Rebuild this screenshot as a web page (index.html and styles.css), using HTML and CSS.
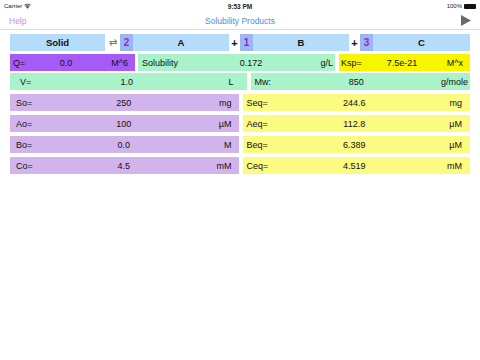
FILE: index.html
```html
<!DOCTYPE html>
<html>
<head>
<meta charset="utf-8">
<link rel="stylesheet" href="styles.css">
</head>
<body>
<div class="status">
  <div class="carrier">Carrier <svg class="wifi" width="7" height="6" viewBox="0 0 14 11"><path d="M7 11 L4.5 8 A3.5 3.5 0 0 1 9.5 8 Z M2.6 6 A6.5 6.5 0 0 1 11.4 6 L10.3 7.2 A5 5 0 0 0 3.7 7.2 Z M0.6 3.7 A9.5 9.5 0 0 1 13.4 3.7 L12.3 4.9 A8 8 0 0 0 1.7 4.9 Z" fill="#333"/></svg></div>
  <div class="time">9:53 PM</div>
  <div class="batt">100% <span class="battery"></span></div>
</div>
<div class="nav">
  <div class="help">Help</div>
  <div class="title">Solubility Products</div>
  <svg class="play" width="10" height="11" viewBox="0 0 10 11"><path d="M0 0 L10 5.5 L0 11 Z" fill="#6b6b6b"/></svg>
</div>
<div class="content">
  <div class="eq">
    <div class="sp solid">Solid</div>
    <div class="op arrows">⇄</div>
    <div class="num">2</div>
    <div class="sp">A</div>
    <div class="op">+</div>
    <div class="num">1</div>
    <div class="sp">B</div>
    <div class="op">+</div>
    <div class="num">3</div>
    <div class="sp">C</div>
  </div>
  <div class="row r2">
    <div class="cell purple qcell"><span>Q=</span><span class="v">0.0</span><span class="u">M^6</span></div>
    <div class="cell green solcell"><span>Solubility</span><span class="v">0.172</span><span class="u">g/L</span></div>
    <div class="cell yellow kcell"><span>Ksp=</span><span class="v">7.5e-21</span><span class="u">M^x</span></div>
  </div>
  <div class="row half r3">
    <div class="cell green vcell"><span>V=</span><span class="v">1.0</span><span class="u">L</span></div>
    <div class="cell green mwcell"><span>Mw:</span><span class="v">850</span><span class="u">g/mole</span></div>
  </div>
  <div class="row half r4">
    <div class="cell lav lc"><span>So=</span><span class="v">250</span><span class="u">mg</span></div>
    <div class="cell ly rc"><span>Seq=</span><span class="v">244.6</span><span class="u">mg</span></div>
  </div>
  <div class="row half">
    <div class="cell lav lc"><span>Ao=</span><span class="v">100</span><span class="u">µM</span></div>
    <div class="cell ly rc"><span>Aeq=</span><span class="v">112.8</span><span class="u">µM</span></div>
  </div>
  <div class="row half">
    <div class="cell lav lc"><span>Bo=</span><span class="v">0.0</span><span class="u">M</span></div>
    <div class="cell ly rc"><span>Beq=</span><span class="v">6.389</span><span class="u">µM</span></div>
  </div>
  <div class="row half">
    <div class="cell lav lc"><span>Co=</span><span class="v">4.5</span><span class="u">mM</span></div>
    <div class="cell ly rc"><span>Ceq=</span><span class="v">4.519</span><span class="u">mM</span></div>
  </div>
</div>
</body>
</html>
```
FILE: styles.css
```css
* { box-sizing: border-box; }
html, body { margin: 0; padding: 0; background: #fff; }
body {
  width: 480px;
  height: 360px;
  font-family: "Liberation Sans", Arial, sans-serif;
  color: #111;
  overflow: hidden;
}
.status {
  height: 12px;
  display: grid;
  grid-template-columns: 1fr auto 1fr;
  align-items: center;
  padding: 0 4px;
  font-size: 6px;
  color: #222;
}
.carrier { display: flex; align-items: center; gap: 2px; }
.time { font-weight: bold; font-size: 6.5px; }
.batt { justify-self: end; display: flex; align-items: center; gap: 2px; }
.battery { width: 12px; height: 5px; background: #111; border-radius: 1px; display: inline-block; }
.nav {
  height: 18px;
  display: grid;
  grid-template-columns: 1fr auto 1fr;
  align-items: center;
  padding: 0 9px;
  border-bottom: 1px solid #dcdcdc;
  font-size: 8.5px;
}
.help { color: #c48ef0; }
.title { color: #4a8fd6; }
.play { justify-self: end; }
.content { padding: 4px 10px 0 10px; }
.eq {
  display: grid;
  grid-template-columns: 95px 15px 13px 96px 11px 13px 96px 11px 13px 97px;
  height: 17px;
  font-size: 9.5px;
  font-weight: bold;
}
.sp { background: #b5dcfb; display: flex; align-items: center; justify-content: center; }
.num { background: #9cb6f4; color: #9a1fc7; display: flex; align-items: center; justify-content: center; font-size: 10px; }
.op { display: flex; align-items: center; justify-content: center; font-size: 11px; }
.arrows { color: #777; font-weight: normal; font-size: 10px; }
.row { display: flex; height: 17px; margin-top: 3px; font-size: 9px; }
.r3 { margin-top: 2px; }
.half { gap: 4px; }
.half .cell { flex: 1; }
.half + .half { margin-top: 4px; }
.cell { display: grid; align-items: center; }
.cell .v { text-align: center; }
.cell .u { text-align: right; }
.purple { background: #a75bf6; }
.green { background: #aaf2c9; }
.yellow { background: #f7f500; }
.lav { background: #d2b4ec; }
.ly { background: #fbfb82; }
.qcell { width: 125px; grid-template-columns: 20px 1fr 29px; padding: 0 7px 0 3px; }
.solcell { width: 197px; margin-left: 3px; grid-template-columns: 45px 1fr 18px; padding: 0 2px 0 4px; }
.kcell { width: 131px; margin-left: 4px; grid-template-columns: 30px 1fr 30px; padding: 0 7px 0 2px; }
.vcell { grid-template-columns: 30px 1fr 30px; padding: 0 13px 0 10px; }
.mwcell { grid-template-columns: 30px 1fr 40px; padding: 0 2px 0 4px; }
.lc { grid-template-columns: 30px 1fr 30px; padding: 0 7px 0 6px; }
.rc { grid-template-columns: 30px 1fr 30px; padding: 0 8px 0 4px; }
```
